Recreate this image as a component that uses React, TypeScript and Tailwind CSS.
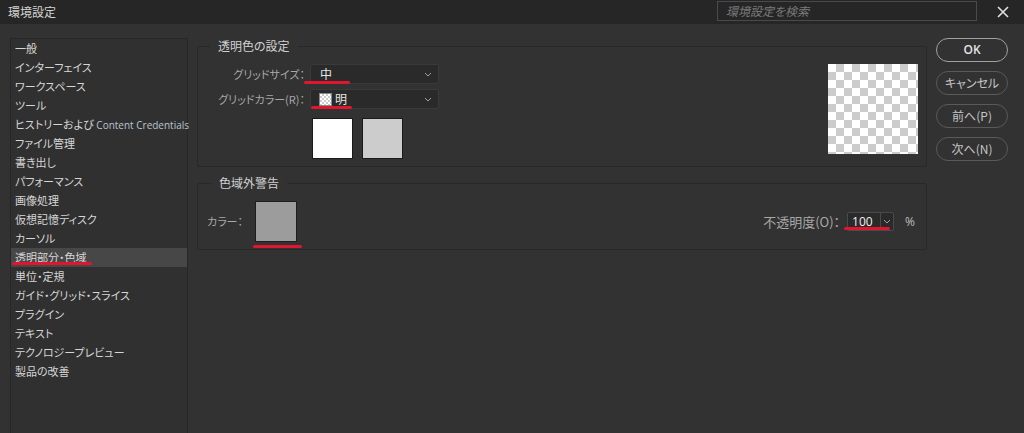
import React from 'react';

const FONT = '"Noto Sans CJK JP", "Noto Sans", sans-serif';
const LATIN = '"Open Sans", "Noto Sans", sans-serif';

const menuItems = [
  '一般',
  'インターフェイス',
  'ワークスペース',
  'ツール',
  'HISTORY',
  'ファイル管理',
  '書き出し',
  'パフォーマンス',
  '画像処理',
  '仮想記憶ディスク',
  'カーソル',
  '透明部分・色域',
  '単位・定規',
  'ガイド・グリッド・スライス',
  'プラグイン',
  'テキスト',
  'テクノロジープレビュー',
  '製品の改善',
];

function Chevron() {
  return (
    <svg width="8" height="5" viewBox="0 0 8 5" className="shrink-0">
      <path d="M1 1 L4 4 L7 1" fill="none" stroke="#a0a0a0" strokeWidth="1" />
    </svg>
  );
}

function Checker({ size, cell, id }: { size: number; cell: number; id: string }) {
  return (
    <svg width={size} height={size} className="block">
      <defs>
        <pattern id={id} width={cell * 2} height={cell * 2} patternUnits="userSpaceOnUse">
          <rect width={cell * 2} height={cell * 2} fill="#ffffff" />
          <rect x={cell} width={cell} height={cell} fill="#cccccc" />
          <rect y={cell} width={cell} height={cell} fill="#cccccc" />
        </pattern>
      </defs>
      <rect width={size} height={size} fill={`url(#${id})`} />
    </svg>
  );
}

function Mark({ className }: { className: string }) {
  return <div className={`absolute h-[3px] rounded-full bg-[#e0152f] ${className}`} />;
}

export default function App() {
  return (
    <div
      className="relative w-[1024px] h-[433px] overflow-hidden bg-[#323232] text-[11px] text-[#cfcfcf] [font-feature-settings:'palt']"
      style={{ fontFamily: FONT }}
    >
      {/* Title bar */}
      <div className="flex h-[24px] items-start bg-[#262626]">
        <div className="pl-[8px] pt-[3px] text-[12px] leading-[18px] text-[#d2d2d2]">環境設定</div>
        <div className="ml-auto mt-[1px] flex h-[20px] w-[260px] items-center border border-[#4a4a4a] bg-[#262626] pl-[8px] text-[12px] italic text-[#7a7a7a]">
          環境設定を検索
        </div>
        <div className="ml-[20px] mr-[15px] mt-[6px]">
          <svg width="12" height="12" viewBox="0 0 12 12">
            <path d="M1 1 L11 11 M11 1 L1 11" stroke="#e0e0e0" strokeWidth="1.6" />
          </svg>
        </div>
      </div>

      {/* Body */}
      <div className="flex h-[409px] pl-[10px] pt-[14px]">
        {/* Sidebar */}
        <div className="h-[420px] w-[178px] border border-[#272727] bg-[#303030]">
          {menuItems.map((item, i) => (
            <div
              key={item}
              className={`h-[19px] px-[4px] leading-[18px] whitespace-nowrap text-[11px] text-[#d6d6d6] ${
                i === 11 ? 'bg-[#474747]' : ''
              }`}
            >
              {item === 'HISTORY' ? (
                <>
                  ヒストリーおよび{' '}
                  <span className="text-[10px] text-[#b6c4d2]" style={{ fontFamily: LATIN }}>
                    Content Credentials
                  </span>
                </>
              ) : (
                item
              )}
            </div>
          ))}
        </div>

        {/* Main */}
        <div className="ml-[9px] flex w-[730px] flex-col gap-[8px]">
          <fieldset className="m-0 rounded-[2px] border border-[#282828] p-0">
            <legend className="ml-[12px] px-[8px] text-[12px] leading-[16px] text-[#d0d0d0]">透明色の設定</legend>
            <div className="flex justify-between pb-[7px]">
              <div className="pl-[7px] pt-[10px]">
                <div className="grid grid-cols-[100px_129px] items-center gap-x-[5px] gap-y-[5px]">
                  <div className="whitespace-nowrap text-right leading-[20px] text-[#a8a8a8]">グリッドサイズ：</div>
                  <div className="flex h-[20px] items-center justify-between rounded-[2px] border border-[#3a3a3a] bg-[#2a2a2a] pl-[9px] pr-[6px] text-[12px] text-[#e6e6e6]">
                    <span>中</span>
                    <Chevron />
                  </div>
                  <div className="whitespace-nowrap text-right leading-[20px] text-[#a8a8a8]">グリッドカラー(R)：</div>
                  <div className="flex h-[20px] items-center justify-between rounded-[2px] border border-[#3a3a3a] bg-[#2a2a2a] pl-[8px] pr-[6px] text-[12px] text-[#e6e6e6]">
                    <span className="flex items-center gap-[3px]">
                      <span className="inline-block border border-[#888]">
                        <Checker size={11} cell={2} id="mini" />
                      </span>
                      明
                    </span>
                    <Chevron />
                  </div>
                  <div />
                  <div className="ml-[2px] mt-[4px] flex gap-[9px]">
                    <div className="h-[41px] w-[41px] border border-[#1a1a1a] bg-white" />
                    <div className="h-[41px] w-[41px] border border-[#1a1a1a] bg-[#cccccc]" />
                  </div>
                </div>
              </div>
              <div className="pr-[8px] pt-[10px]">
                <Checker size={90} cell={8} id="big" />
              </div>
            </div>
          </fieldset>

          <fieldset className="m-0 rounded-[2px] border border-[#282828] p-0">
            <legend className="ml-[13px] px-[8px] text-[12px] leading-[16px] text-[#d0d0d0]">色域外警告</legend>
            <div className="flex items-center pb-[7px] pl-[9px] pr-[11px] pt-[10px]">
              <div className="w-[48px] text-[#a8a8a8]">カラー：</div>
              <div className="h-[41px] w-[42px] border border-[#1e1e1e] bg-[#9c9c9c]" />
              <div className="ml-auto flex items-center">
                <span className="text-[13px] text-[#a8a8a8]">不透明度(O)：</span>
                <div className="ml-[7px] flex h-[19px] w-[47px] items-center rounded-[2px] border border-[#4a4a4a] bg-[#2a2a2a]">
                  <span className="w-[32px] pl-[4px] text-[12px] leading-[17px] text-[#f0f0f0]" style={{ fontFamily: LATIN }}>
                    100
                  </span>
                  <div className="flex h-full flex-1 items-center justify-center border-l border-[#4a4a4a]">
                    <Chevron />
                  </div>
                </div>
                <span className="ml-[11px] text-[12px] text-[#bdbdbd]" style={{ fontFamily: LATIN }}>
                  %
                </span>
              </div>
            </div>
          </fieldset>
        </div>

        {/* Buttons */}
        <div className="ml-[9px] flex w-[72px] flex-col gap-[9px]">
          <button
            className="h-[24px] rounded-full border-[1.5px] border-[#a0a0a0] text-[12px] font-semibold text-[#e4e4e4]"
            style={{ fontFamily: LATIN }}
          >
            OK
          </button>
          <button className="h-[24px] rounded-full border-[1.5px] border-[#5a5a5a] text-[12px] text-[#c4c4c4]">キャンセル</button>
          <button className="h-[24px] rounded-full border-[1.5px] border-[#5a5a5a] text-[12px] text-[#c4c4c4]">前へ(P)</button>
          <button className="h-[24px] rounded-full border-[1.5px] border-[#5a5a5a] text-[12px] text-[#c4c4c4]">次へ(N)</button>
        </div>
      </div>

      {/* Red annotation marks */}
      <Mark className="left-[304px] top-[81px] w-[46px]" />
      <Mark className="left-[311px] top-[106px] w-[41px]" />
      <Mark className="left-[12px] top-[262px] w-[80px]" />
      <Mark className="left-[253px] top-[245px] w-[49px]" />
      <Mark className="left-[844px] top-[227px] w-[46px]" />
    </div>
  );
}
